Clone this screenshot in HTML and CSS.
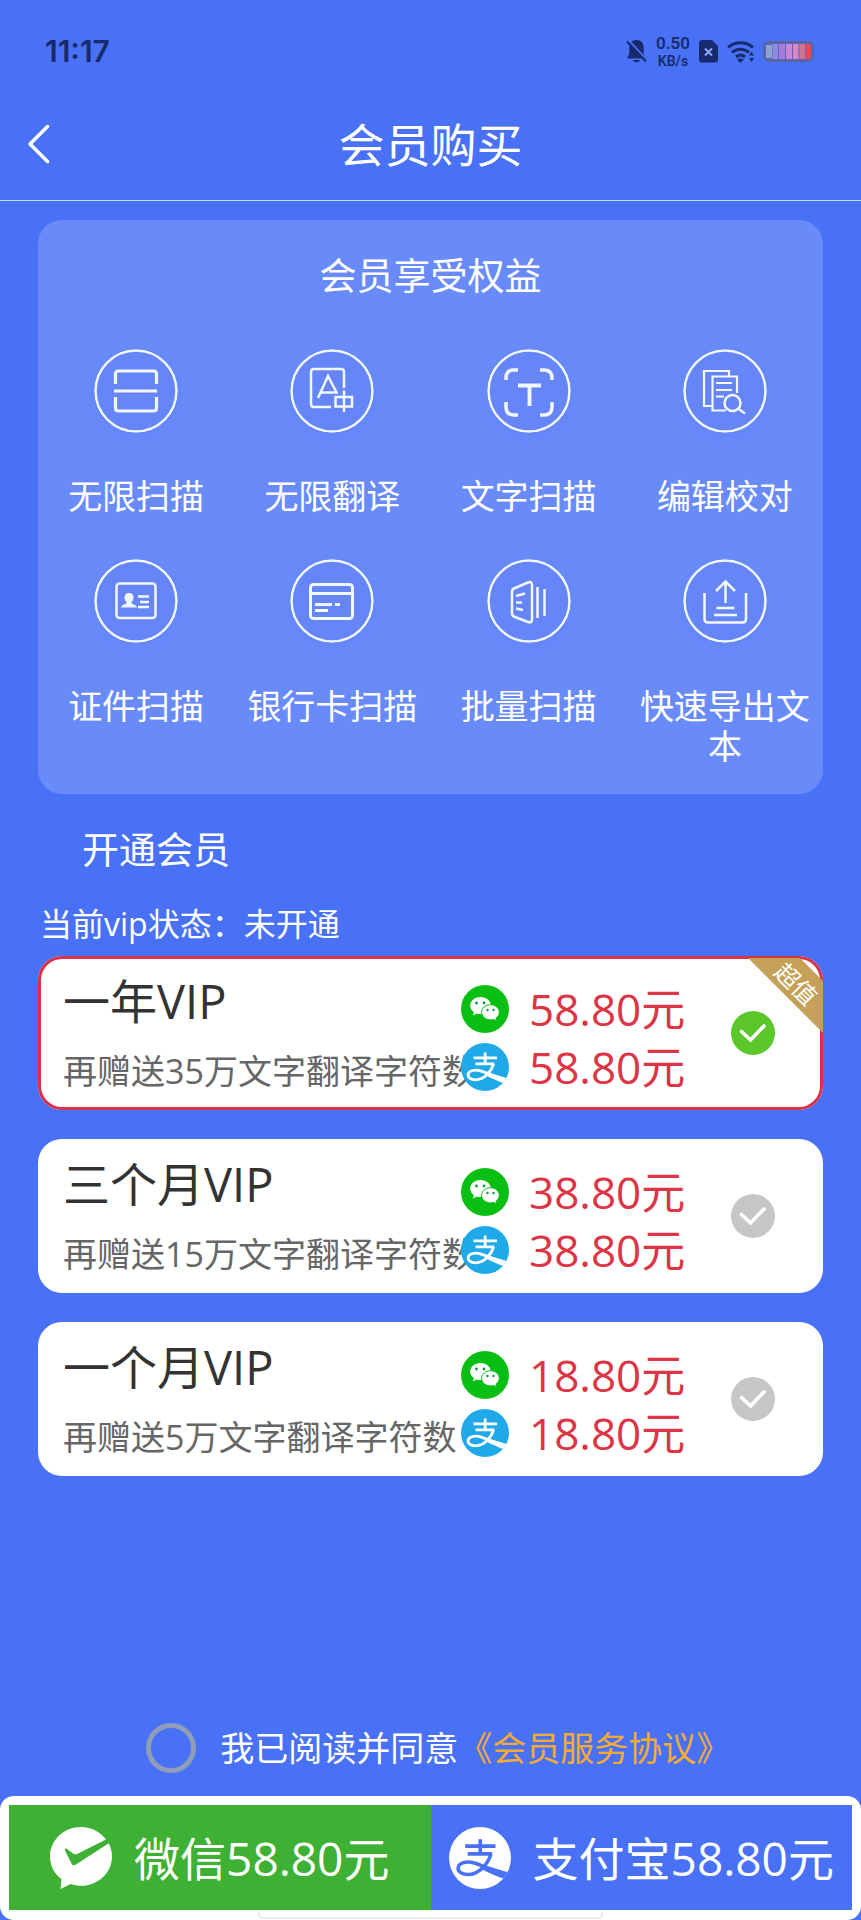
FILE: index.html
```html
<!DOCTYPE html>
<html lang="zh-CN">
<head>
<meta charset="utf-8">
<meta name="viewport" content="width=device-width, initial-scale=1">
<title>会员购买</title>
<link rel="stylesheet" href="styles.css">
</head>
<body>
<svg class="sprite" aria-hidden="true">
  <symbol id="wechat" viewBox="0 0 48 48">
    <circle cx="24" cy="24" r="24" fill="#0abf14"/>
    <path d="M19.500 12C13.700 12 9.200 15.800 9.200 20.600c0 2.700 1.400 5 3.700 6.600l-1 3.200 3.800-1.900c1.200.4 2.500.6 3.800.6 5.800 0 10.300-3.800 10.300-8.500S25.300 12 19.500 12z" fill="#fff"/>
    <path d="M29.500 19.700c-5 0-8.900 3.400-8.900 7.600s3.900 7.600 8.900 7.600c1.100 0 2.200-.2 3.200-.5l3.100 1.600-.8-2.800c2-1.400 3.300-3.500 3.300-5.900 0-4.200-3.900-7.600-8.800-7.600z" fill="#fff" stroke="#0abf14" stroke-width="1"/>
    <g fill="#0a9a3c"><circle cx="15.500" cy="18" r="1.400"/><circle cx="23" cy="18" r="1.400"/><circle cx="26.500" cy="25" r="1.200"/><circle cx="32.500" cy="25" r="1.200"/></g>
  </symbol>
  <symbol id="alipay-mark" viewBox="0 0 48 48">
    <path d="M12.500 14.800h23.500M14.500 20.800h18.800M24.200 9.500v11" fill="none" stroke="currentColor" stroke-width="2.800"/>
    <path d="M32.500 20.800C30.500 28 23.500 36.800 14.500 36.800c-5 0-8-2.400-7.300-5.700.8-3.500 7-5 12.300-3.300C26 29.800 33 33.600 40 36" fill="none" stroke="currentColor" stroke-width="2.800"/>
    <path d="M26 29l19.500 6-2 5.500C38 38.500 32 36 25 32.500z" fill="currentColor"/>
  </symbol>
  <symbol id="tick" viewBox="0 0 44 44">
    <path d="M10.500 20.500l9 8.500L33 15" fill="none" stroke="#fff" stroke-width="3.600" stroke-linecap="round"/>
  </symbol>
</svg>

<header class="top">
  <div class="status">
    <time class="clock">11:17</time>
    <div class="signals">
      <svg width="21" height="23" viewBox="0 0 21 23"><path d="M10.500 0C6 0 3.300 3 3.300 7.500V14L1 18.500h19L17.700 14V7.500C17.700 3 15 0 10.500 0zM7 20h7c-.5 1.500-2 2.500-3.500 2.500S7.500 21.500 7 20z" fill="#172a6e"/><path d="M2.500 0L21 20" stroke="#4971f5" stroke-width="2"/><path d="M1 1.500L20 21.500" stroke="#172a6e" stroke-width="2"/></svg>
      <div class="speed"><span class="speed-value">0.50</span><span class="speed-unit">KB/s</span></div>
      <svg width="19" height="23" viewBox="0 0 19 23"><path d="M3.500 0H13l6 6v13.500a3 3 0 0 1-3 3H3a3 3 0 0 1-3-3v-16A3.500 3.500 0 0 1 3.500 0z" fill="#172a6e"/><path d="M6 8.500l7 7M13 8.500l-7 7" stroke="#8fa8fa" stroke-width="2"/></svg>
      <svg width="27" height="23" viewBox="0 0 27 23"><g fill="none" stroke="#172a6e" stroke-width="3"><path d="M1 7.500C8 1 19 1 26 7.500"/><path d="M5 12.500c5-4.500 12-4.500 17 0"/><path d="M9 17c3-2.500 6-2.500 9 0"/></g><path d="M10 19.500c2-1.500 5-1.500 7 0L13.500 23z" fill="#172a6e"/><path d="M24.500 11.500l2.500 4h-5zM24.500 22l2.500-4h-5z" fill="#172a6e"/></svg>
      <svg width="51" height="21" viewBox="0 0 51 21"><rect x="1" y="1" width="49" height="19" rx="5" fill="#5c67b8" stroke="#5a64a0" stroke-width="2"/><path d="M3 4h6v13H3z" fill="#8ba3cf"/><path d="M9.500 3H15v15H9.500z" fill="#8f8be0"/><path d="M16 3h6v15h-6z" fill="#a77bdc"/><path d="M23 3h6v15h-6z" fill="#cf86d2"/><path d="M30 3h5.500v15H30z" fill="#d987c4"/><path d="M36.500 3H42v15h-5.500z" fill="#cd7590"/><path d="M42.500 3H46a2 2 0 0 1 2 2v11a2 2 0 0 1-2 2h-3.500z" fill="#e34a5c"/></svg>
    </div>
  </div>
  <nav class="nav">
    <button class="back" type="button" aria-label="返回"><svg width="22" height="40" viewBox="0 0 22 40"><path d="M19.500 2.500L2 20l17.500 17.500" fill="none" stroke="#fff" stroke-width="3.500" stroke-linecap="round" stroke-linejoin="round"/></svg></button>
    <h1 class="title">会员购买</h1>
  </nav>
</header>

<main class="content">
  <section class="benefits">
    <h2 class="benefits-title">会员享受权益</h2>
    <ul class="benefit-grid">
      <li class="benefit"><svg class="badge" viewBox="0 0 84 84"><circle cx="42" cy="42" r="40.500"/><path stroke-width="3.200" d="M21.500 35V25q0-3 3-3h35q3 0 3 3v10M20 42h43M21.500 48v11q0 3 3 3h35q3 0 3-3V48"/></svg><span>无限扫描</span></li>
      <li class="benefit"><svg class="badge" viewBox="0 0 84 84"><circle cx="42" cy="42" r="40.500"/><path d="M54 39V23q0-3-3-3H24q-3 0-3 3v32q0 3 3 3h17M28 49l10-22 8.500 16.500H30.500M45.500 48h16.500v9.500H45.500zM54 41.500V63"/></svg><span>无限翻译</span></li>
      <li class="benefit"><svg class="badge" viewBox="0 0 84 84"><circle cx="42" cy="42" r="40.500"/><path stroke-width="3.500" d="M19 31v-2q0-8 8-8h4M53 21h4q8 0 8 8v2M65 53v5q0 8-8 8h-4M31 66h-4q-8 0-8-8v-5"/><path stroke-width="3.800" d="M31 36.500h23M42.500 36.500V57"/></svg><span>文字扫描</span></li>
      <li class="benefit"><svg class="badge" viewBox="0 0 84 84"><circle cx="42" cy="42" r="40.500"/><path stroke-width="2.200" d="M29 57h-8V22h25v5M54 44V27.500H29.500V61.500H43M33 34h16M33 41h16M33 47.500h8"/><circle cx="49.500" cy="54" r="8"/><path d="M55 59.500l7 5"/></svg><span>编辑校对</span></li>
      <li class="benefit"><svg class="badge" viewBox="0 0 84 84"><circle cx="42" cy="42" r="40.500"/><rect x="22.500" y="24.500" width="39" height="34.500" rx="3"/><path class="solid" d="M35 34c-3 0-4.500 2-4.500 4.500 0 2 1 3.500 2 4.500v1.500c-2 1-5 1.500-5.500 4h16c-.5-2.500-3.500-3-5.500-4V43c1-1 2-2.500 2-4.500C39.500 36 38 34 35 34z"/><path d="M44 37.500h11M46 43h9M44 48h11"/></svg><span>证件扫描</span></li>
      <li class="benefit"><svg class="badge" viewBox="0 0 84 84"><circle cx="42" cy="42" r="40.500"/><rect x="20.500" y="25.500" width="42" height="34" rx="3" stroke-width="3"/><path stroke-width="3" d="M20 34.500h43M25 45.500h17M45 45.500h5M25 51.500h13"/></svg><span>银行卡扫描</span></li>
      <li class="benefit"><svg class="badge" viewBox="0 0 84 84"><circle cx="42" cy="42" r="40.500"/><path d="M28 29l13-5.500q4-1.500 4 3V60q0 4.500-4 3l-13-5q-3-1-3-3.500V32.500q0-2.500 3-3.500zM29 37l9-2.500M29 43.500h6M29 49.500l7 1.500M50.500 28v31M57.500 30v27"/></svg><span>批量扫描</span></li>
      <li class="benefit"><svg class="badge" viewBox="0 0 84 84"><circle cx="42" cy="42" r="40.500"/><path d="M21.500 34v26q0 3.500 3.500 3.500h34.500q3.500 0 3.500-3.500V34M42.500 44V22.500M33 32l9.500-9.500L52 32M33.500 49h18M31 56h23"/></svg><span>快速导出文本</span></li>
    </ul>
  </section>

  <h2 class="section-title">开通会员</h2>
  <p class="vip-state">当前vip状态：未开通</p>

  <div class="plans" role="radiogroup" aria-label="开通会员">
    <label class="plan">
      <span class="plan-info"><span class="plan-name">一年VIP</span><span class="plan-gift">再赠送35万文字翻译字符数</span></span>
      <span class="prices">
        <span class="price"><svg class="pay-logo"><use href="#wechat"/></svg>58.80元</span>
        <span class="price"><svg class="pay-logo alipay"><use href="#alipay-mark"/></svg>58.80元</span>
      </span>
      <span class="choice"><input class="choice-input" type="radio" name="plan" checked><svg class="choice-tick"><use href="#tick"/></svg></span>
      <span class="ribbon"><span class="ribbon-text">超值</span></span>
    </label>
    <label class="plan">
      <span class="plan-info"><span class="plan-name">三个月VIP</span><span class="plan-gift">再赠送15万文字翻译字符数</span></span>
      <span class="prices">
        <span class="price"><svg class="pay-logo"><use href="#wechat"/></svg>38.80元</span>
        <span class="price"><svg class="pay-logo alipay"><use href="#alipay-mark"/></svg>38.80元</span>
      </span>
      <span class="choice"><input class="choice-input" type="radio" name="plan"><svg class="choice-tick"><use href="#tick"/></svg></span>
    </label>
    <label class="plan">
      <span class="plan-info"><span class="plan-name">一个月VIP</span><span class="plan-gift">再赠送5万文字翻译字符数</span></span>
      <span class="prices">
        <span class="price"><svg class="pay-logo"><use href="#wechat"/></svg>18.80元</span>
        <span class="price"><svg class="pay-logo alipay"><use href="#alipay-mark"/></svg>18.80元</span>
      </span>
      <span class="choice"><input class="choice-input" type="radio" name="plan"><svg class="choice-tick"><use href="#tick"/></svg></span>
    </label>
  </div>
</main>

<footer class="bottom">
  <div class="agreement">
    <input class="agree-input" type="checkbox" id="agree">
    <p class="agree-text"><label for="agree">我已阅读并同意</label><a class="terms" href="#terms">《会员服务协议》</a></p>
  </div>
  <div class="pay-bar">
    <button class="pay wechat-pay" type="button"><svg class="pay-icon" viewBox="0 0 62 62"><path d="M31 0C14 0 0 13 0 29.500 0 39 4.500 47 11.500 52L10.500 62l10-5c3.500 1.200 7 1.800 10.500 1.800 17 0 31-13 31-29.300 0-4.800-1.200-9.300-3.300-13.200L26 37.500c-2 1.200-4 1-4.500-1L15 23.500c-.8-1.800.8-2.500 2-1.500l6 4.500c1.500 1 2.500 1 4 .5L56 12.500C50.500 5 41.500 0 31 0z" fill="#fff"/></svg>微信58.80元</button>
    <button class="pay alipay-pay" type="button"><svg class="pay-icon round"><use href="#alipay-mark"/></svg>支付宝58.80元</button>
    <span class="home-indicator"></span>
  </div>
</footer>
</body>
</html>
```
FILE: styles.css
```css
* {
  box-sizing: border-box;
}

body {
  margin: 0;
  min-height: 100vh;
  display: flex;
  flex-direction: column;
  background: #4971f5;
  color: #fff;
  font-family: "Open Sans", "Noto Sans CJK SC", sans-serif;
  font-size: 34px;
  line-height: 40px;
}

h1, h2, p, ul {
  margin: 0;
  padding: 0;
  font-weight: 400;
}

button {
  border: 0;
  padding: 0;
  background: none;
  color: inherit;
  font: inherit;
}

.sprite {
  display: none;
}

/* Header */
.top {
  border-bottom: 1px solid #c5dcf5;
}

.status {
  display: flex;
  justify-content: space-between;
  align-items: center;
  height: 90px;
  padding: 12px 47px 0 45px;
  color: #172a6e;
}

.clock {
  font-family: Inter, sans-serif;
  font-size: 30px;
  font-weight: 600;
}

.signals {
  display: flex;
  align-items: center;
  gap: 9px;
}

.speed {
  display: flex;
  flex-direction: column;
  align-items: center;
  font-family: Roboto, sans-serif;
  font-size: 14px;
  font-weight: 600;
}

.speed-value {
  font-size: 17px;
  line-height: 20px;
}

.speed-unit {
  line-height: 16px;
}

.nav {
  display: grid;
  grid-template-columns: 60px 1fr 60px;
  align-items: center;
  height: 108px;
  margin-bottom: 2px;
}

.back {
  height: 60px;
  display: flex;
  align-items: center;
  padding-left: 28px;
}

.title {
  font-size: 46px;
  line-height: 60px;
  text-align: center;
}

/* Benefits panel */
.content {
  padding: 19px 38px 40px;
}

.benefits {
  padding: 30px 0 28px;
  border-radius: 24px;
  background: #698bf9;
}

.benefits-title {
  font-size: 37px;
  line-height: 52px;
  text-align: center;
}

.benefit-grid {
  display: grid;
  grid-template-columns: repeat(4, minmax(0, 1fr));
  row-gap: 43px;
  margin-top: 47px;
  list-style: none;
}

.benefit {
  display: flex;
  flex-direction: column;
  align-items: center;
  gap: 43px;
  text-align: center;
}

.badge {
  width: 84px;
  height: 84px;
  border-radius: 50%;
  background: #6686f8;
  box-shadow: 0 6px 12px rgba(84, 116, 240, 0.2);
  fill: none;
  stroke: #f1f8ff;
  stroke-width: 2.5;
}

.badge .solid {
  fill: #f1f8ff;
  stroke: none;
}

/* Plans */
.section-title {
  margin: 30px 0 0 44px;
  font-size: 37px;
  line-height: 52px;
}

.vip-state {
  margin: 28px 0 12px 2px;
  font-size: 32px;
}

.plans {
  display: grid;
  gap: 29px;
}

.plan {
  position: relative;
  display: grid;
  grid-template-columns: minmax(0, 1fr) 270px 44px;
  align-items: center;
  height: 154px;
  padding: 0 48px 0 25px;
  border-radius: 24px;
  background: #fff;
  color: #333;
}

.plan:has(:checked) {
  box-shadow: inset 0 0 0 3px #d9304c;
}

.plan-info {
  display: flex;
  flex-direction: column;
  gap: 20px;
  padding-bottom: 4px;
  white-space: nowrap;
}

.plan-name {
  font-size: 47px;
  line-height: 60px;
}

.plan-gift {
  color: #666;
}

.prices {
  display: grid;
  gap: 10px;
  padding-top: 10px;
}

.price {
  display: flex;
  align-items: center;
  gap: 20px;
  color: #dc3545;
  font-size: 44px;
  line-height: 48px;
}

.pay-logo {
  position: relative;
  width: 48px;
  height: 48px;
}

.alipay {
  border-radius: 50%;
  background: #1fa9e8;
  color: #fff;
}

.choice {
  display: grid;
}

.choice-input,
.choice-tick {
  grid-area: 1 / 1;
  width: 44px;
  height: 44px;
  margin: 0;
}

.choice-input {
  appearance: none;
  border-radius: 50%;
  background: #c6c6c6;
}

.choice-input:checked {
  background: #5bc72a;
}

.choice-tick {
  pointer-events: none;
}

.ribbon {
  position: absolute;
  top: 2px;
  right: 0;
  width: 75px;
  height: 75px;
  background: #c4a156;
  clip-path: polygon(0 0, 52px 0, 100% 23px, 100% 100%);
}

.ribbon-text {
  position: absolute;
  top: 12px;
  left: 24px;
  color: #fff;
  font-size: 24px;
  line-height: 28px;
  transform: rotate(45deg);
}

/* Agreement and payment */
.bottom {
  margin-top: auto;
}

.agreement {
  display: flex;
  align-items: center;
  gap: 24px;
  padding: 0 17% 23px;
}

.agree-input {
  appearance: none;
  flex: none;
  width: 50px;
  height: 50px;
  margin: 0;
  border: 5px solid #909db8;
  border-radius: 50%;
}

.agree-input:checked {
  background: #fff;
}

.agree-text {
  white-space: nowrap;
}

.terms {
  color: #f3ab35;
  text-decoration: none;
}

.pay-bar {
  position: relative;
  display: grid;
  grid-template-columns: 1fr 1fr;
  padding: 9px 9px 10px;
  border-radius: 14px;
  background: #fff;
}

.pay {
  display: flex;
  align-items: center;
  justify-content: center;
  gap: 22px;
  height: 105px;
  font-size: 46px;
  line-height: 60px;
  white-space: nowrap;
}

.wechat-pay {
  background: #3eb134;
}

.alipay-pay {
  background: #4971f5;
}

.pay-icon {
  flex: none;
  width: 62px;
  height: 62px;
}

.round {
  border-radius: 50%;
  background: #fff;
  color: #4971f5;
}

.home-indicator {
  position: absolute;
  bottom: 1px;
  left: 30%;
  right: 30%;
  height: 7px;
  border: solid #ececec;
  border-width: 0 2px 2px;
  border-radius: 0 0 4px 4px;
}
```
